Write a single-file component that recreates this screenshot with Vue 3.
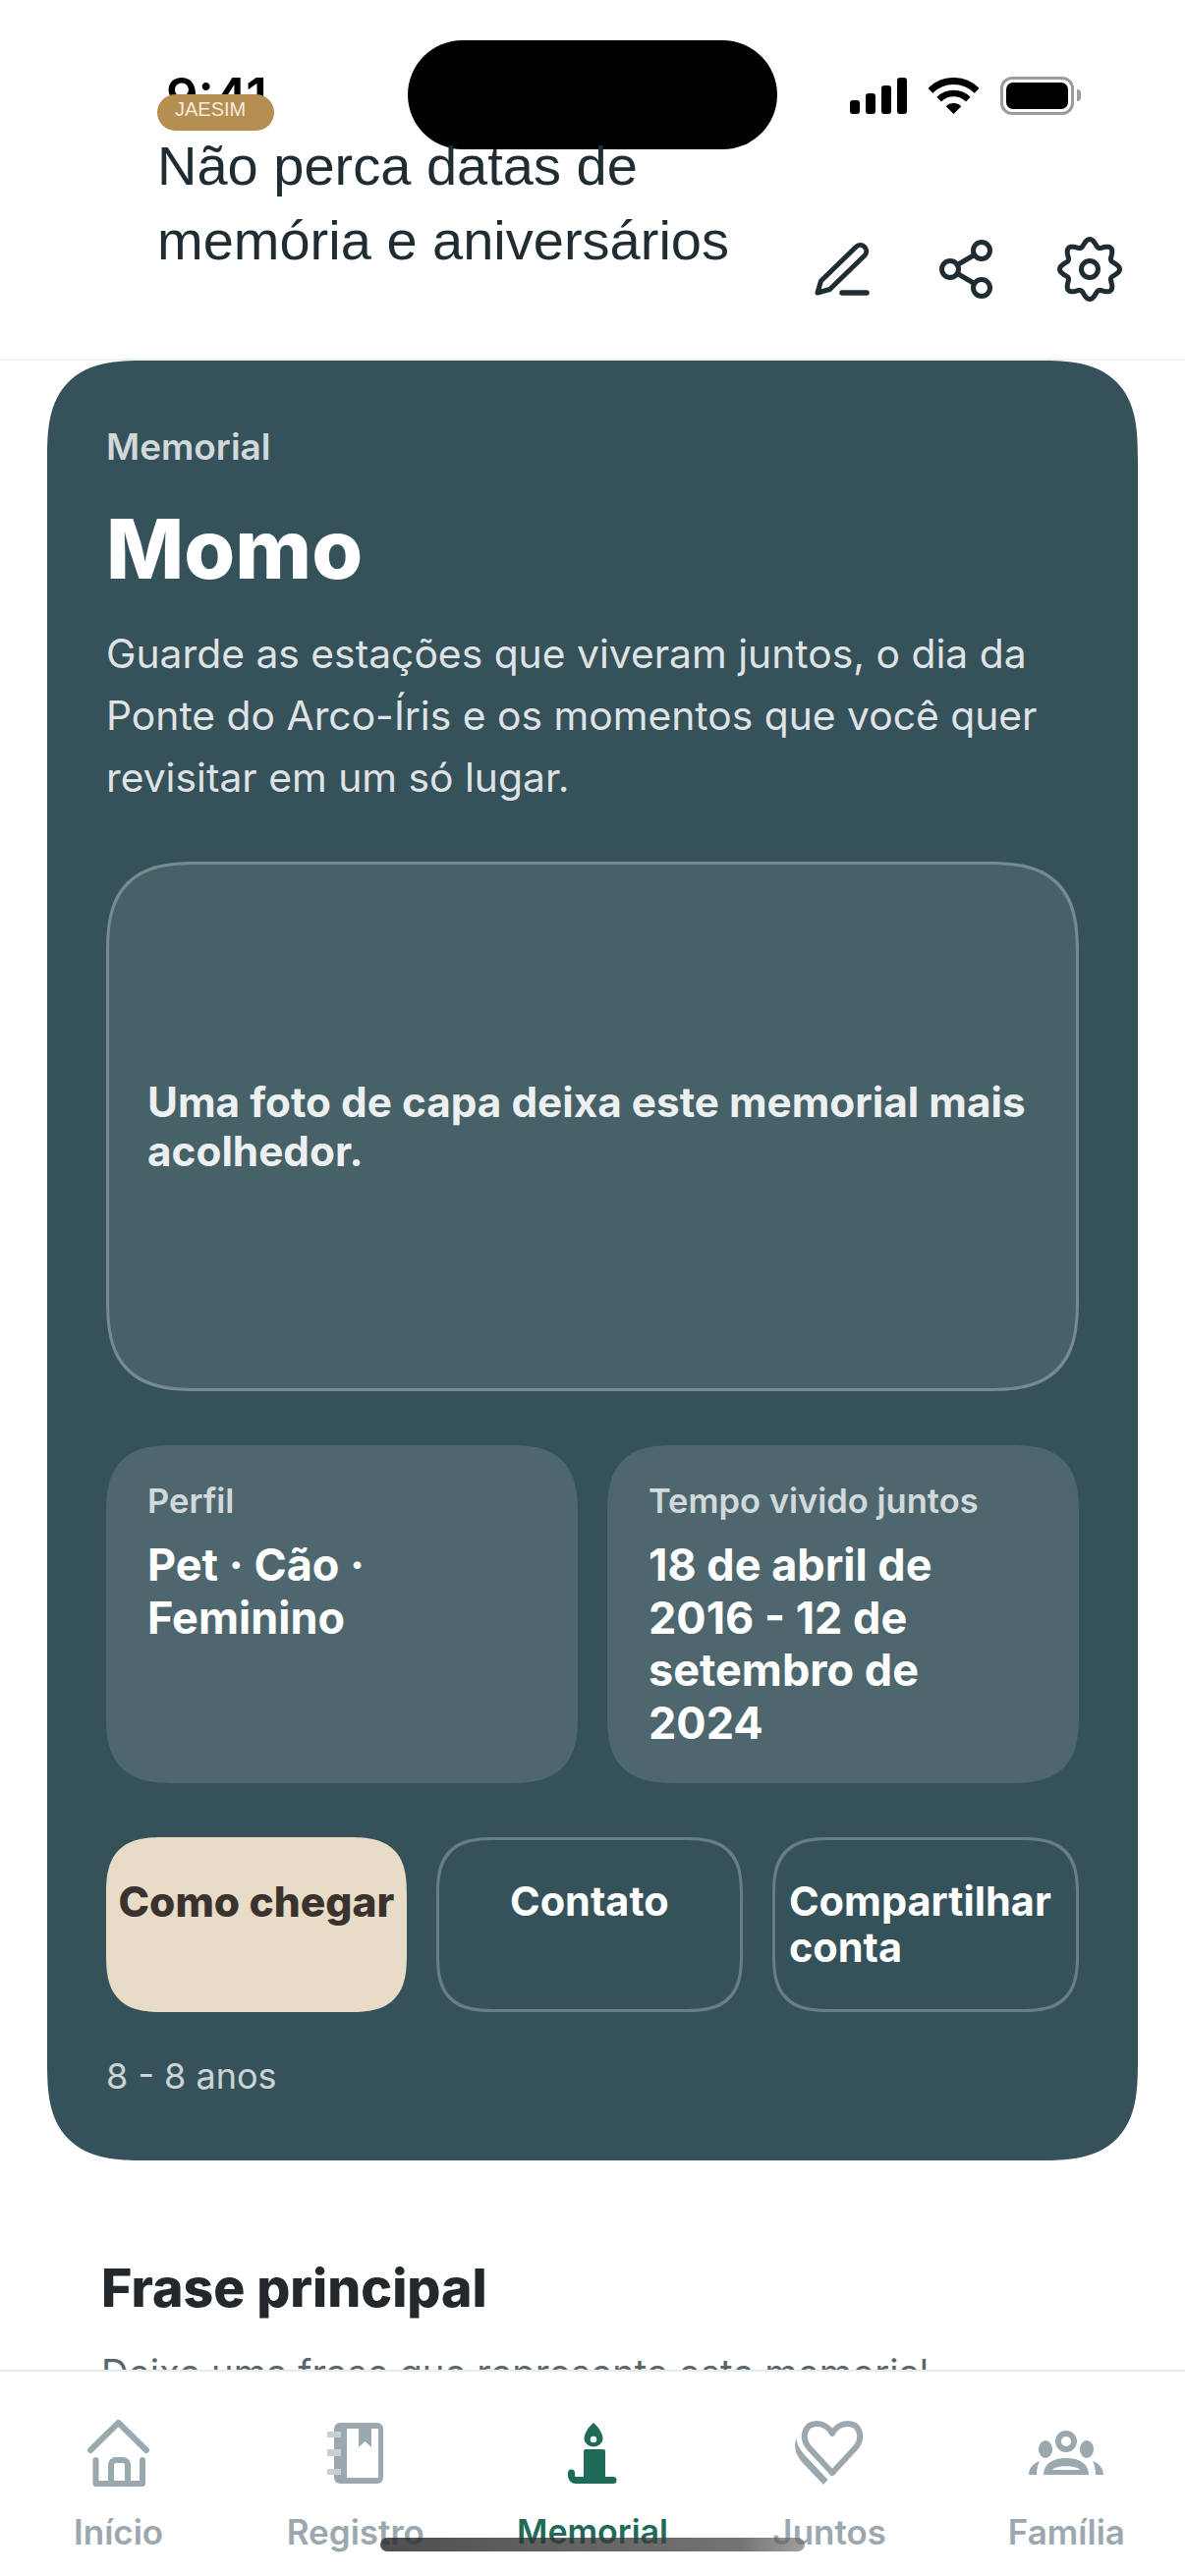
<template>
  <div class="page">
    <!-- status bar -->
    <div class="status-bar">
      <span class="time">9:41</span>
      <div class="status-icons">
        <svg class="signal" width="58" height="37" viewBox="0 0 58 37">
          <rect x="0" y="23" width="10" height="14" rx="3" />
          <rect x="16" y="16" width="10" height="21" rx="3" />
          <rect x="32" y="8" width="10" height="29" rx="3" />
          <rect x="48" y="0" width="10" height="37" rx="3" />
        </svg>
        <svg class="wifi" width="51" height="37" viewBox="0 0 51 37">
          <path d="M1.8 13.3A33.5 33.5 0 0 1 49.2 13.3" fill="none" stroke="#000" stroke-width="7" />
          <path d="M10.65 22.15A21 21 0 0 1 40.35 22.15" fill="none" stroke="#000" stroke-width="6.5" />
          <path d="M25.5 37L17.7 29.2A11 11 0 0 1 33.3 29.2Z" fill="#000" />
        </svg>
        <div class="battery">
          <div class="battery-fill"></div>
          <div class="battery-cap"></div>
        </div>
      </div>
    </div>
    <div class="island"></div>

    <header class="header">
      <div class="header-text">
        <span class="badge">JAESIM</span>
        <h1 class="header-title">Não perca datas de<br />memória e aniversários</h1>
      </div>
      <div class="header-actions">
        <button class="action">
          <svg width="56" height="54" viewBox="0 0 56 54" fill="none" stroke="#1f2d33" stroke-width="5" stroke-linecap="round" stroke-linejoin="round">
            <path d="M3 51L6.500 39L42 4.500A6 6 0 0 1 51 13L15.500 47.500Z" />
            <path d="M28 51H53" stroke-width="5.500" />
          </svg>
        </button>
        <button class="action">
          <svg width="56" height="60" viewBox="0 0 56 60" fill="none" stroke="#1f2d33" stroke-width="5">
            <circle cx="44" cy="11" r="8.500" />
            <circle cx="12" cy="30" r="8.500" />
            <circle cx="44" cy="49" r="8.500" />
            <path d="M19.500 25.500L36.500 15.500M19.500 34.500L36.500 44.500" />
          </svg>
        </button>
        <button class="action">
          <svg width="66" height="66" viewBox="0 0 66 66" fill="none" stroke="#1f2d33" stroke-width="5">
            <path :d="gearPath" stroke-linejoin="round" />
            <circle cx="33" cy="33" r="8.500" />
          </svg>
        </button>
      </div>
    </header>

    <main class="content">
      <section class="card">
        <div class="eyebrow">Memorial</div>
        <h2 class="name">Momo</h2>
        <p class="intro">Guarde as estações que viveram juntos, o dia da Ponte do Arco-Íris e os momentos que você quer revisitar em um só lugar.</p>

        <div class="cover">
          <span>Uma foto de capa deixa este memorial mais acolhedor.</span>
        </div>

        <div class="info-grid">
          <div v-for="item in infoItems" :key="item.label" class="info">
            <div class="info-label">{{ item.label }}</div>
            <div class="info-value">{{ item.value }}</div>
          </div>
        </div>

        <div class="buttons">
          <button class="btn btn-primary"><span>Como chegar</span></button>
          <button class="btn btn-outline"><span>Contato</span></button>
          <button class="btn btn-outline"><span>Compartilhar conta</span></button>
        </div>

        <div class="age">8 - 8 anos</div>
      </section>

      <section class="quote">
        <h3 class="quote-title">Frase principal</h3>
        <p class="quote-text">Deixe uma frase que representa este memorial.</p>
      </section>
    </main>

    <nav class="tabbar">
      <div class="tab">
        <div class="tab-icon">
          <svg width="64" height="68" viewBox="0 0 64 68" fill="none" stroke="#9ca8b0" stroke-width="6" stroke-linecap="round" stroke-linejoin="round">
            <path d="M3 31L31.500 3L60 31" />
            <path d="M8.500 41V65H56V41" />
            <path d="M24 65V46A5 5 0 0 1 29 41H36A5 5 0 0 1 41 46V65" />
          </svg>
        </div>
        <span>Início</span>
      </div>
      <div class="tab">
        <div class="tab-icon">
          <svg width="58" height="64" viewBox="0 0 58 64">
            <rect x="7" y="1" width="50" height="62" rx="6" fill="#9ca8b0" />
            <rect x="20" y="7" width="32" height="50" fill="#fff" />
            <path d="M32 7H45V26L38.500 20L32 26Z" fill="#9ca8b0" />
            <rect x="0" y="10" width="14" height="6" fill="#c9d0d4" />
            <rect x="0" y="28" width="14" height="7" fill="#c9d0d4" />
            <rect x="0" y="48" width="14" height="6" fill="#c9d0d4" />
          </svg>
        </div>
        <span>Registro</span>
      </div>
      <div class="tab tab-active">
        <div class="tab-icon">
          <svg width="52" height="64" viewBox="0 0 52 64">
            <path d="M27 1C33 6 36.500 13 36.500 17A9.500 8.500 0 0 1 17.500 17C17.500 13 21 6 27 1Z" fill="#1f6b5a" />
            <circle cx="27" cy="18" r="3.300" fill="#fff" />
            <rect x="17" y="28" width="22" height="34" rx="2" fill="#1f6b5a" />
            <path d="M4.500 52V55A4.500 4.500 0 0 0 9 59.500H47" fill="none" stroke="#1f6b5a" stroke-width="7" stroke-linecap="round" />
          </svg>
        </div>
        <span>Memorial</span>
      </div>
      <div class="tab">
        <div class="tab-icon">
          <svg width="72" height="66" viewBox="0 0 72 66">
            <path d="M39 53L15 27C7 17 11 3 23 3C30 3 36 7 39 13C42 7 48 3 55 3C67 3 71 17 63 27Z" fill="none" stroke="#9ca8b0" stroke-width="6" stroke-linejoin="round" />
            <path d="M2.500 17C-1 28 3 36 9 43L30 65L34.500 60L12 36C6 29 2.500 24 2.500 17Z" fill="#9ca8b0" />
          </svg>
        </div>
        <span>Juntos</span>
      </div>
      <div class="tab">
        <div class="tab-icon">
          <svg width="76" height="46" viewBox="0 0 76 46">
            <circle cx="38" cy="11" r="8" fill="none" stroke="#9ca8b0" stroke-width="6" />
            <ellipse cx="17" cy="19" rx="7" ry="9" fill="#9ca8b0" />
            <ellipse cx="59" cy="19" rx="7" ry="9" fill="#9ca8b0" />
            <path d="M15 45C15 34 24 28 38 28C52 28 61 34 61 45Z" fill="#9ca8b0" />
            <path d="M24 40C28 35 48 35 52 40Z" fill="#fff" />
            <path d="M0 45C0 38 5 33 11 31C9 35 8 40 8 45Z" fill="#9ca8b0" />
            <path d="M76 45C76 38 71 33 65 31C67 35 68 40 68 45Z" fill="#9ca8b0" />
          </svg>
        </div>
        <span>Família</span>
      </div>
    </nav>
    <div class="home-bar"></div>
  </div>
</template>

<script setup>
const infoItems = [
  { label: 'Perfil', value: 'Pet · Cão · Feminino' },
  { label: 'Tempo vivido juntos', value: '18 de abril de 2016 - 12 de setembro de 2024' },
];

// engrenagem de 8 dentes arredondados
const gearPath = (() => {
  const points = [];
  for (let i = 0; i < 160; i++) {
    const angle = (i / 160) * Math.PI * 2;
    const radius = 27 + 3.5 * Math.cos(8 * angle);
    const x = 33 + radius * Math.sin(angle);
    const y = 33 - radius * Math.cos(angle);
    points.push(`${x.toFixed(2)} ${y.toFixed(2)}`);
  }
  return `M${points.join('L')}Z`;
})();
</script>

<style>
html,
body {
  margin: 0;
  background: #fff;
}
</style>

<style scoped>
.page {
  position: relative;
  width: 1206px;
  height: 2622px;
  display: flex;
  flex-direction: column;
  overflow: hidden;
  background: #fff;
  font-family: Inter, "Noto Sans", sans-serif;
}

/* status bar */
.status-bar {
  position: absolute;
  top: 78px;
  left: 169px;
  right: 113px;
  display: flex;
  justify-content: space-between;
  align-items: center;
  height: 39px;
}

.time {
  font-size: 51px;
  line-height: 39px;
  font-weight: 600;
  color: #000;
}

.status-icons {
  display: flex;
  align-items: center;
}

.wifi {
  margin-left: 22px;
}

.battery {
  position: relative;
  width: 75px;
  height: 39px;
  margin-left: 22px;
  box-sizing: border-box;
  border: 3px solid #a09c95;
  border-radius: 12px;
  padding: 3px;
}

.battery-fill {
  height: 100%;
  background: #000;
  border-radius: 7px;
}

.battery-cap {
  position: absolute;
  right: -10px;
  top: 10px;
  width: 4px;
  height: 12px;
  background: #a09c95;
  border-radius: 0 4px 4px 0;
}

.island {
  position: absolute;
  top: 41px;
  left: 415px;
  width: 376px;
  height: 111px;
  border-radius: 56px;
  background: #000;
}

/* header: o título e o selo ficam por cima da barra de status */
.header {
  position: relative;
  z-index: 1;
  flex: none;
  height: 367px;
  box-sizing: border-box;
  display: flex;
  justify-content: space-between;
  align-items: flex-end;
  padding: 96px 61px 55px 160px;
  border-bottom: 2px solid #eef1f1;
}

.header-text {
  align-self: flex-start;
}

.badge {
  display: block;
  width: 119px;
  height: 37px;
  line-height: 30px;
  padding-left: 18px;
  box-sizing: border-box;
  border-radius: 19px;
  background: #b58e52;
  color: #f6ecdc;
  font-family: "Liberation Sans", sans-serif;
  font-size: 20px;
}

.header-title {
  margin: -2px 0 0;
  font-family: "Liberation Sans", sans-serif;
  font-size: 56px;
  line-height: 76px;
  font-weight: 400;
  color: #1f2d33;
}

.header-actions {
  display: flex;
  gap: 54px;
}

.action {
  width: 72px;
  height: 72px;
  padding: 0;
  border: 0;
  background: none;
  display: flex;
  align-items: center;
  justify-content: center;
}

/* conteúdo */
.content {
  flex: 1;
  min-height: 0;
  overflow: hidden;
  padding: 0 48px;
}

.card {
  padding: 61px 60px 59px;
  border-radius: 72px;
  background: #35525a;
  color: #fff;
}

.eyebrow {
  font-size: 37px;
  line-height: 54px;
  font-weight: 600;
  color: rgba(255, 255, 255, 0.78);
}

.name {
  margin: 31px 0 0;
  font-size: 84px;
  line-height: 92px;
  font-weight: 800;
}

.intro {
  margin: 29px 0 0;
  font-size: 40.8px;
  line-height: 63px;
  font-weight: 400;
  color: rgba(255, 255, 255, 0.86);
}

.cover {
  margin-top: 54px;
  height: 539px;
  box-sizing: border-box;
  display: flex;
  align-items: center;
  padding: 0 39px;
  border: 3px solid rgba(255, 255, 255, 0.26);
  border-radius: 72px;
  background: rgba(255, 255, 255, 0.09);
  font-size: 42.3px;
  line-height: 50px;
  font-weight: 700;
  color: rgba(255, 255, 255, 0.92);
}

.info-grid {
  display: grid;
  grid-template-columns: 1fr 1fr;
  gap: 30px;
  margin-top: 55px;
}

.info {
  padding: 34px 42px 35px;
  border-radius: 54px;
  background: rgba(255, 255, 255, 0.125);
}

.info-label {
  font-size: 34.5px;
  line-height: 45px;
  font-weight: 600;
  color: rgba(255, 255, 255, 0.76);
}

.info-value {
  margin-top: 16px;
  font-size: 45px;
  line-height: 53.5px;
  font-weight: 700;
}

.buttons {
  display: flex;
  gap: 30px;
  margin-top: 55px;
}

.btn {
  flex: 1 1 0;
  display: flex;
  justify-content: center;
  align-items: flex-start;
  padding: 42px 14px;
  min-height: 93px;
  border: 0;
  border-radius: 48px;
  font-family: inherit;
  font-size: 41.5px;
  line-height: 47px;
  font-weight: 700;
  text-align: left;
}

.btn-primary {
  padding-left: 12.5px;
  padding-right: 12.5px;
  background: #e8dcc6;
  color: #3a322e;
  font-size: 42.5px;
  font-weight: 800;
  white-space: nowrap;
}

.btn-outline {
  border: 3px solid rgba(255, 255, 255, 0.26);
  padding-top: 39px;
  padding-bottom: 39px;
  background: none;
  color: #fff;
}

.age {
  margin-top: 38px;
  font-size: 36px;
  line-height: 54px;
  color: rgba(255, 255, 255, 0.76);
}

.quote {
  padding: 94px 55px 0;
}

.quote-title {
  margin: 0;
  font-size: 53.6px;
  line-height: 72px;
  font-weight: 800;
  color: #22282b;
}

.quote-text {
  margin: 19px 0 0;
  font-size: 38.2px;
  line-height: 63px;
  color: #5a666c;
}

/* cantos contínuos quando o navegador suporta */
@supports (corner-shape: superellipse(1.5)) {
  .card {
    corner-shape: superellipse(1.5);
    border-radius: 100px;
  }
  .cover {
    corner-shape: superellipse(1.5);
    border-radius: 96px;
  }
  .info {
    corner-shape: superellipse(1.5);
    border-radius: 72px;
  }
  .btn {
    corner-shape: superellipse(1.5);
    border-radius: 60px;
  }
}

/* tab bar */
.tabbar {
  flex: none;
  height: 210px;
  box-sizing: border-box;
  display: grid;
  grid-template-columns: repeat(5, 1fr);
  padding-top: 46px;
  border-top: 2px solid #e6ecec;
  background: #fff;
}

.tab {
  display: flex;
  flex-direction: column;
  align-items: center;
  font-size: 35px;
  line-height: 44px;
  font-weight: 600;
  color: #9ca8b0;
}

.tab-active {
  color: #1f6b5a;
  font-size: 34px;
}

.tab-icon {
  height: 74px;
  margin-bottom: 21px;
  display: flex;
  align-items: center;
  justify-content: center;
}

.home-bar {
  position: absolute;
  left: 387px;
  top: 2583px;
  width: 432px;
  height: 14px;
  border-radius: 7px;
  background: linear-gradient(90deg, rgba(40, 40, 40, 0.82), rgba(70, 70, 70, 0.75) 85%, rgba(110, 110, 105, 0.65));
}
</style>
